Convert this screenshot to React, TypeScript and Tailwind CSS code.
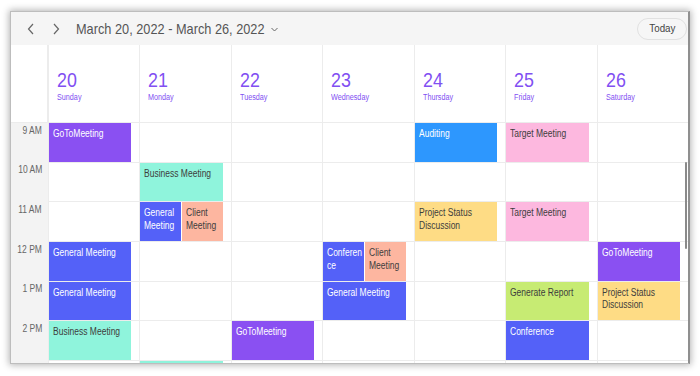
import React from "react";

type Ev = { t: string; c: string };

const PURPLE = "bg-[#8a50f2] text-white";
const BLUE = "bg-[#5461f8] text-white";
const SKY = "bg-[#2d97fe] text-white";
const MINT = "bg-[#8ff4dc] text-[#3d3d3d]";
const SALMON = "bg-[#fdb6a0] text-[#3d3d3d]";
const PINK = "bg-[#fdb8df] text-[#3d3d3d]";
const YELLOW = "bg-[#fedc85] text-[#3d3d3d]";
const GREEN = "bg-[#c7eb73] text-[#3d3d3d]";

const hours = ["9 AM", "10 AM", "11 AM", "12 PM", "1 PM", "2 PM", "3 PM"];

const days: { n: number; name: string; slots: Record<number, Ev[]> }[] = [
  {
    n: 20,
    name: "Sunday",
    slots: {
      0: [{ t: "GoToMeeting", c: PURPLE }],
      3: [{ t: "General Meeting", c: BLUE }],
      4: [{ t: "General Meeting", c: BLUE }],
      5: [{ t: "Business Meeting", c: MINT }],
    },
  },
  {
    n: 21,
    name: "Monday",
    slots: {
      1: [{ t: "Business Meeting", c: MINT }],
      2: [
        { t: "General Meeting", c: BLUE },
        { t: "Client Meeting", c: SALMON },
      ],
      6: [{ t: "", c: MINT }],
    },
  },
  {
    n: 22,
    name: "Tuesday",
    slots: {
      5: [{ t: "GoToMeeting", c: PURPLE }],
    },
  },
  {
    n: 23,
    name: "Wednesday",
    slots: {
      3: [
        { t: "Conference", c: BLUE },
        { t: "Client Meeting", c: SALMON },
      ],
      4: [{ t: "General Meeting", c: BLUE }],
    },
  },
  {
    n: 24,
    name: "Thursday",
    slots: {
      0: [{ t: "Auditing", c: SKY }],
      2: [{ t: "Project Status Discussion", c: YELLOW }],
    },
  },
  {
    n: 25,
    name: "Friday",
    slots: {
      0: [{ t: "Target Meeting", c: PINK }],
      2: [{ t: "Target Meeting", c: PINK }],
      4: [{ t: "Generate Report", c: GREEN }],
      5: [{ t: "Conference", c: BLUE }],
    },
  },
  {
    n: 26,
    name: "Saturday",
    slots: {
      3: [{ t: "GoToMeeting", c: PURPLE }],
      4: [{ t: "Project Status Discussion", c: YELLOW }],
    },
  },
];

// the UI font is narrower than Liberation Sans, so squeeze text horizontally
const narrow = "inline-block origin-left scale-x-[0.85] whitespace-nowrap";

function Chevron({ dir }: { dir: "left" | "right" }) {
  return (
    <svg width="10" height="12" viewBox="0 0 10 12" fill="none">
      <polyline
        points={dir === "left" ? "7,1 2.5,6 7,11" : "3,1 7.5,6 3,11"}
        stroke="#666"
        strokeWidth="1.2"
      />
    </svg>
  );
}

export default function App() {
  return (
    <div className="w-[700px] h-[376px] bg-white pl-[10px] pt-[11px] font-['Liberation_Sans',sans-serif]">
      <div className="relative flex h-[353px] w-[680px] flex-col overflow-hidden border border-[#bdbdbd] border-r-2 border-r-[#8f8f8f] bg-white shadow-[0_0_7px_1px_rgba(0,0,0,0.3)]">
        {/* Toolbar */}
        <div className="flex h-[33px] shrink-0 items-center bg-[#f5f5f5]">
          <div className="ml-[15px] flex items-center gap-[15px]">
            <Chevron dir="left" />
            <Chevron dir="right" />
          </div>
          <div className="ml-[15px] w-[188px] text-[15px] leading-[18px] text-[#555]">
            <span className={narrow}>March 20, 2022 - March 26, 2022</span>
          </div>
          <svg className="ml-[7px] mt-[1px]" width="7" height="5" viewBox="0 0 7 5" fill="none">
            <polyline points="0.5,1 3.5,4 6.5,1" stroke="#666" strokeWidth="1" />
          </svg>
          <button className="ml-auto mr-[1px] flex h-[22px] w-[50px] items-center justify-center rounded-full border border-[#e1e1e1] bg-[#f6f6f6] text-[11.5px] text-[#444]">
            <span className="inline-block scale-x-[0.85]">Today</span>
          </button>
        </div>

        {/* Date header */}
        <div className="flex h-[78px] shrink-0 border-b border-[#ececec]">
          <div className="w-[37px] shrink-0 border-r border-[#ececec]" />
          {days.map((d) => (
            <div key={d.n} className="min-w-0 flex-1 border-l border-[#ececec] first:border-l-0 pl-[8px] pt-[23px] text-[#8150f2]">
              <div className="text-[21px] leading-[24px]">
                <span className={narrow}>{d.n}</span>
              </div>
              <div className="text-[8.5px] leading-[10px]">
                <span className={narrow}>{d.name}</span>
              </div>
            </div>
          ))}
        </div>

        {/* Body */}
        <div className="flex flex-1">
          <div className="w-[37px] shrink-0 bg-[#f3f3f3]">
            {hours.map((h) => (
              <div key={h} className="h-[39.7px] pr-[6px] pt-[1.5px] text-right text-[10px] leading-[12px] text-[#666]">
                <span className="inline-block origin-right scale-x-[0.85] whitespace-nowrap">{h}</span>
              </div>
            ))}
          </div>
          {days.map((d) => (
            <div key={d.n} className="min-w-0 flex-1 border-l border-[#ececec] first:border-l-0">
              {hours.map((h, i) => (
                <div key={h} className="flex h-[39.7px] gap-[1.5px] border-b border-[#ececec] pr-[8px]">
                  {(d.slots[i] || []).map((e, k) => (
                    <div key={k} className={`min-w-0 flex-1 overflow-hidden pl-[4px] pr-[1px] pt-[5px] ${e.c}`}>
                      <div className="w-[117.6%] origin-left scale-x-[0.85] break-words text-[10px] leading-[12.5px]">
                        {e.t}
                      </div>
                    </div>
                  ))}
                </div>
              ))}
            </div>
          ))}
        </div>

        {/* Scrollbar */}
        <div className="absolute right-[1px] top-[150px] h-[87px] w-[2px] rounded bg-[#8a8a8a]" />
      </div>
    </div>
  );
}
